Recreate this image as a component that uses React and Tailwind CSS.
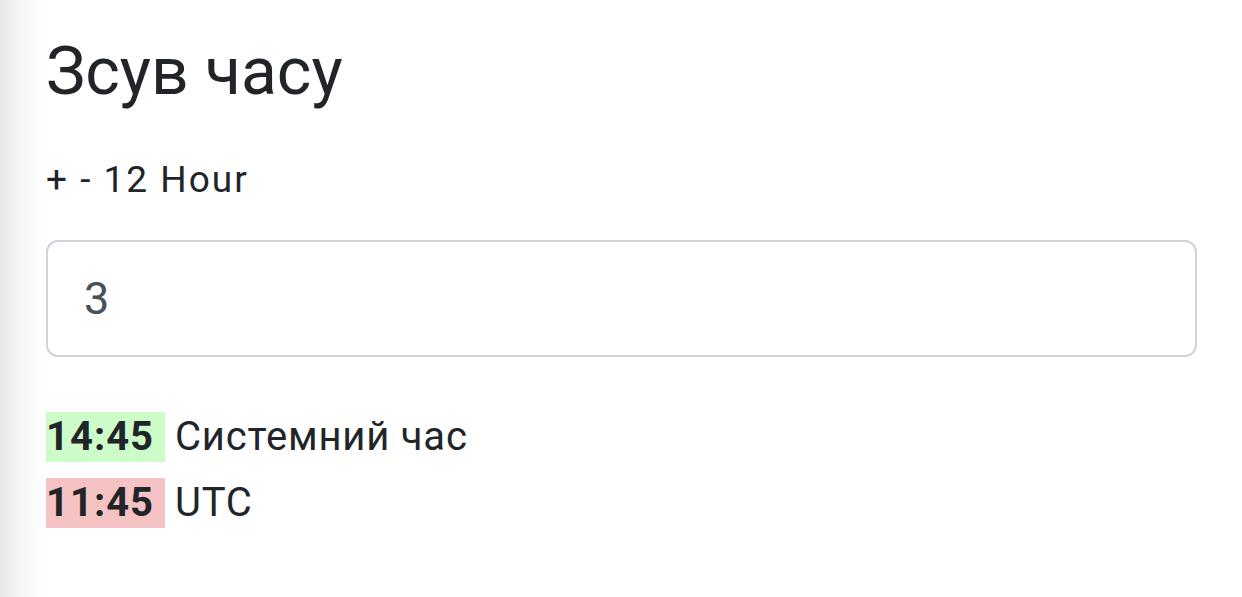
export default function App() {
  return (
    <div className="min-h-screen w-full bg-[linear-gradient(to_right,#e6e6e6_0px,#f6f6f6_22px,#ffffff_44px)] font-['Roboto',sans-serif] text-[#212529]">
      <div className="flex flex-col pl-[46px] pr-[45px] pt-[39px]">
        <h1 className="text-[66px] leading-[66px] font-normal">Зсув часу</h1>
        <div className="mt-[56px] text-[37px] leading-[38px] tracking-[2px]">+ - 12 Hour</div>
        <div className="mt-[41px] flex h-[117px] items-center rounded-[12px] border-2 border-[#cfd3da] bg-white pl-[36px] text-[45px] text-[#495057]">
          3
        </div>
        <div className="mt-[55px] flex flex-col gap-[16px] text-[40px] leading-[50px]">
          <div className="flex items-center gap-[10px]">
            <span className="inline-block h-[50px] w-[119px] bg-[#ccfcc8] font-bold tracking-[1px]">14:45</span>
            <span className="tracking-[0.8px]">Системний час</span>
          </div>
          <div className="flex items-center gap-[10px]">
            <span className="inline-block h-[50px] w-[119px] bg-[#f5c3c3] font-bold tracking-[1px]">11:45</span>
            <span className="tracking-[0.8px]">UTC</span>
          </div>
        </div>
      </div>
    </div>
  );
}
